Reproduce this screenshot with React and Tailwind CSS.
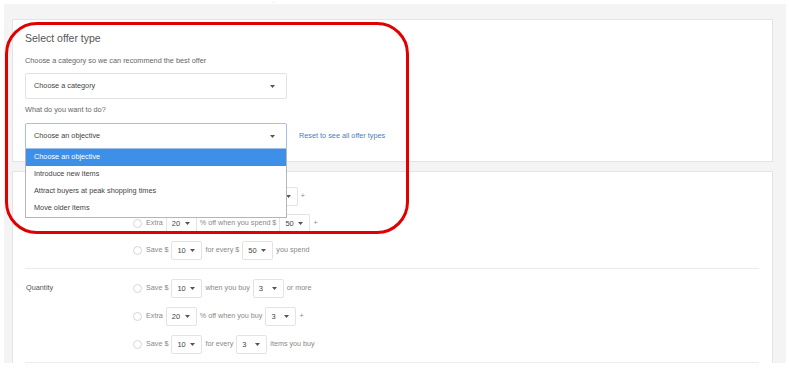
import React from "react";

const FONT = { fontFamily: '"Liberation Sans", Arial, sans-serif' };

const Caret = ({ color = "#555" }) => (
  <svg width="5" height="3" viewBox="0 0 5 3" aria-hidden="true">
    <path d="M0 0h5L2.5 3z" fill={color} />
  </svg>
);

const MiniSelect = ({ value, hideValue }) => (
  <div className="flex h-[19px] w-[31px] shrink-0 items-center justify-between rounded-[2px] border border-[#e3e3e3] bg-white pl-[5px] pr-[6px] text-[7.5px] text-[#444]">
    <span className={hideValue ? "invisible" : ""}>{value}</span>
    <Caret />
  </div>
);

const Radio = ({ hidden }) => (
  <span
    className={`mr-[1px] h-[9px] w-[9px] shrink-0 rounded-full border border-[#d6d6d6] bg-white ${
      hidden ? "invisible" : ""
    }`}
  />
);

// covered: number of leading parts that sit under the open dropdown
const OfferRow = ({ parts, covered = 0 }) => (
  <div className="flex h-[19px] items-center gap-[3px] text-[7.2px] text-[#888]">
    <Radio hidden={covered > 0} />
    {parts.map((p, i) =>
      typeof p === "string" ? (
        <span key={i} className={`whitespace-nowrap ${i < covered ? "invisible" : ""}`}>
          {p}
        </span>
      ) : (
        <MiniSelect key={i} value={p.v} hideValue={i <= covered && covered > 0} />
      )
    )}
  </div>
);

const Section = ({ label, rows, className, gap }) => (
  <div className={`ml-[12px] mr-[13px] flex border-b border-[#ececec] ${className}`}>
    <div className="flex h-[19px] w-[108px] shrink-0 items-center pl-[1px] text-[7.3px] text-[#555]">
      {label}
    </div>
    <div className={`flex flex-col ${gap}`}>
      {rows.map((r, i) => (
        <OfferRow key={i} parts={r.parts} covered={r.covered} />
      ))}
    </div>
  </div>
);

const OBJECTIVES = [
  "Choose an objective",
  "Introduce new items",
  "Attract buyers at peak shopping times",
  "Move older items",
];

export default function App() {
  return (
    <div className="relative h-[369px] w-[789px] overflow-hidden bg-white" style={FONT}>
      <div className="relative h-[4px]">
        <span className="absolute left-[272px] top-[0px] text-[5px] leading-[4px] text-[#bbb]">··</span>
      </div>
      <div className="ml-[4px] mr-[3px] flex h-[359px] flex-col bg-[#f4f4f4] pl-[8px] pr-[13px] pt-[15px]">
        {/* offer type card */}
        <div className="h-[143px] shrink-0 border border-[#e4e4e4] bg-white pl-[12px] pt-[10px]">
          <div className="h-[16px] text-[10.5px] leading-[16px] text-[#555]">Select offer type</div>
          <div className="mt-[9px] h-[12px] text-[7.3px] leading-[12px] text-[#666]">
            Choose a category so we can recommend the best offer
          </div>
          <div className="mt-[6px] flex h-[26px] w-[262px] items-center justify-between rounded-[2px] border border-[#e2e2e2] pl-[8px] pr-[11px] text-[7.3px] text-[#444]">
            <span>Choose a category</span>
            <Caret />
          </div>
          <div className="mt-[5px] h-[12px] text-[7.3px] leading-[12px] text-[#666]">
            What do you want to do?
          </div>
          <div className="mt-[7px] flex items-center gap-[12px]">
            <div className="relative">
              <div className="flex h-[26px] w-[262px] items-center justify-between rounded-t-[2px] border border-[#9fc1ea] pl-[8px] pr-[11px] text-[7.3px] text-[#444]">
                <span>Choose an objective</span>
                <Caret />
              </div>
              <div className="absolute left-0 top-full z-10 w-[262px] border-x border-b border-[#b5b5b5] bg-white">
                {OBJECTIVES.map((o, i) => (
                  <div
                    key={o}
                    className={`flex h-[17px] items-center pl-[8px] text-[7.3px] ${
                      i === 0 ? "bg-[#3d8fe8] text-white" : "text-[#444]"
                    }`}
                  >
                    {o}
                  </div>
                ))}
              </div>
            </div>
            <span className="text-[7.3px] text-[#4a7dbd]">Reset to see all offer types</span>
          </div>
        </div>

        {/* offers card */}
        <div className="mt-[9px] flex-1 border-x border-t border-[#e4e4e4] bg-white">
          <Section
            label=""
            className="pb-[8px] pt-[15px]"
            gap="gap-[8px]"
            rows={[
              { parts: ["Save $", { v: "10" }, "when you spend $", { v: "50" }, "+"], covered: 3 },
              { parts: ["Extra", { v: "20" }, "% off when you spend $", { v: "50" }, "+"] },
              { parts: ["Save $", { v: "10" }, "for every $", { v: "50" }, "you spend"] },
            ]}
          />
          <Section
            label="Quantity"
            className="pb-[8px] pt-[10px]"
            gap="gap-[9px]"
            rows={[
              { parts: ["Save $", { v: "10" }, "when you buy", { v: "3" }, "or more"] },
              { parts: ["Extra", { v: "20" }, "% off when you buy", { v: "3" }, "+"] },
              { parts: ["Save $", { v: "10" }, "for every", { v: "3" }, "items you buy"] },
            ]}
          />
        </div>
      </div>

      {/* annotation */}
      <div className="pointer-events-none absolute left-[5px] top-[22px] z-20 h-[212px] w-[404px] rounded-[32px] border-[3px] border-[#e10000]" />
    </div>
  );
}
